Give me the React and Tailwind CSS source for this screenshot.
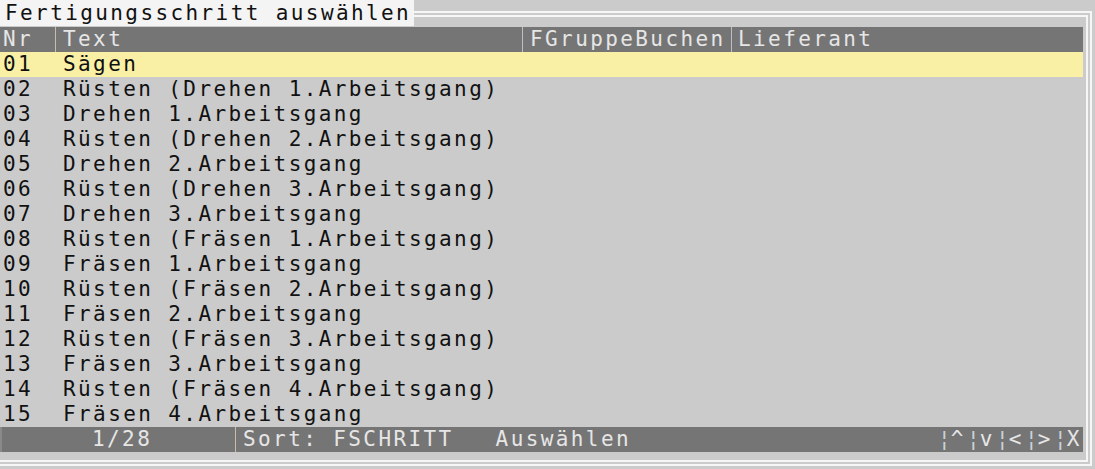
import React from 'react';

// Fertigungsschritte (Auswahlliste)
const ROWS = [
    ['01', 'Sägen'],
    ['02', 'Rüsten (Drehen 1.Arbeitsgang)'],
    ['03', 'Drehen 1.Arbeitsgang'],
    ['04', 'Rüsten (Drehen 2.Arbeitsgang)'],
    ['05', 'Drehen 2.Arbeitsgang'],
    ['06', 'Rüsten (Drehen 3.Arbeitsgang)'],
    ['07', 'Drehen 3.Arbeitsgang'],
    ['08', 'Rüsten (Fräsen 1.Arbeitsgang)'],
    ['09', 'Fräsen 1.Arbeitsgang'],
    ['10', 'Rüsten (Fräsen 2.Arbeitsgang)'],
    ['11', 'Fräsen 2.Arbeitsgang'],
    ['12', 'Rüsten (Fräsen 3.Arbeitsgang)'],
    ['13', 'Fräsen 3.Arbeitsgang'],
    ['14', 'Rüsten (Fräsen 4.Arbeitsgang)'],
    ['15', 'Fräsen 4.Arbeitsgang'],
];

const SELECTED = 0;

const NAV = ['^', 'v', '<', '>', 'X'];

export default function App() {
    return (
        <div
            className="w-[1095px] h-[469px] bg-[#cbcbcb] overflow-hidden relative pt-[11px] pr-[3px] text-[21px] tracking-[2.4px] leading-[25px] text-[#111]"
            style={{ fontFamily: '"DejaVu Sans Mono", "Liberation Mono", monospace' }}
        >
            {/* Frame */}
            <div className="h-[455px] border-t-[6px] border-r-[6px] border-b-[6px] border-double border-[#f6f6f6] pt-[10px] pr-[3px] pb-[2px] flex flex-col">
                {/* Header */}
                <div className="grid grid-cols-[55px_467px_209px_1fr] h-[25px] bg-[#757575] text-[#e6e6e6]">
                    <div className="pl-[3px]">Nr</div>
                    <div className="pl-[7px] border-l border-[#c9bda8]">Text</div>
                    <div className="pl-[7px] border-l border-[#b9c0c8]">FGruppeBuchen</div>
                    <div className="pl-[6px] border-l border-[#b9c0c8]">Lieferant</div>
                </div>

                {/* Rows */}
                <div className="flex flex-col">
                    {ROWS.map(([nr, text], i) => (
                        <div
                            key={nr}
                            className={`grid grid-cols-[55px_467px_209px_1fr] h-[25px] ${i === SELECTED ? 'bg-[#f9f0a6]' : ''}`}
                        >
                            <div className="pl-[3px]">{nr}</div>
                            <div className="pl-[8px] whitespace-pre">{text}</div>
                            <div></div>
                            <div></div>
                        </div>
                    ))}
                </div>

                {/* Footer */}
                <div className="flex h-[25px] bg-[#757575] text-[#e6e6e6] border-l-2 border-[#8a8a8a]">
                    <div className="w-[233px] pl-[90px]">1/28</div>
                    <div className="flex-1 flex pl-[7px] border-l border-[#c9bda8] whitespace-pre">
                        <span>Sort: FSCHRITT</span>
                        <span className="ml-[42px]">Auswählen</span>
                    </div>
                    <div className="flex tracking-normal">
                        {NAV.map((k) => (
                            <span key={k} className="flex">
                                <span className="w-[9px] text-center text-[#c9d2dc]">¦</span>
                                <span className="w-[20px] text-center">{k}</span>
                            </span>
                        ))}
                    </div>
                </div>
            </div>

            {/* Title over the frame line */}
            <div className="absolute top-0 left-0 h-[26px] bg-[#f4f4f4] pl-[5px] pr-[3px] leading-[27px]">
                Fertigungsschritt auswählen
            </div>
        </div>
    );
}
